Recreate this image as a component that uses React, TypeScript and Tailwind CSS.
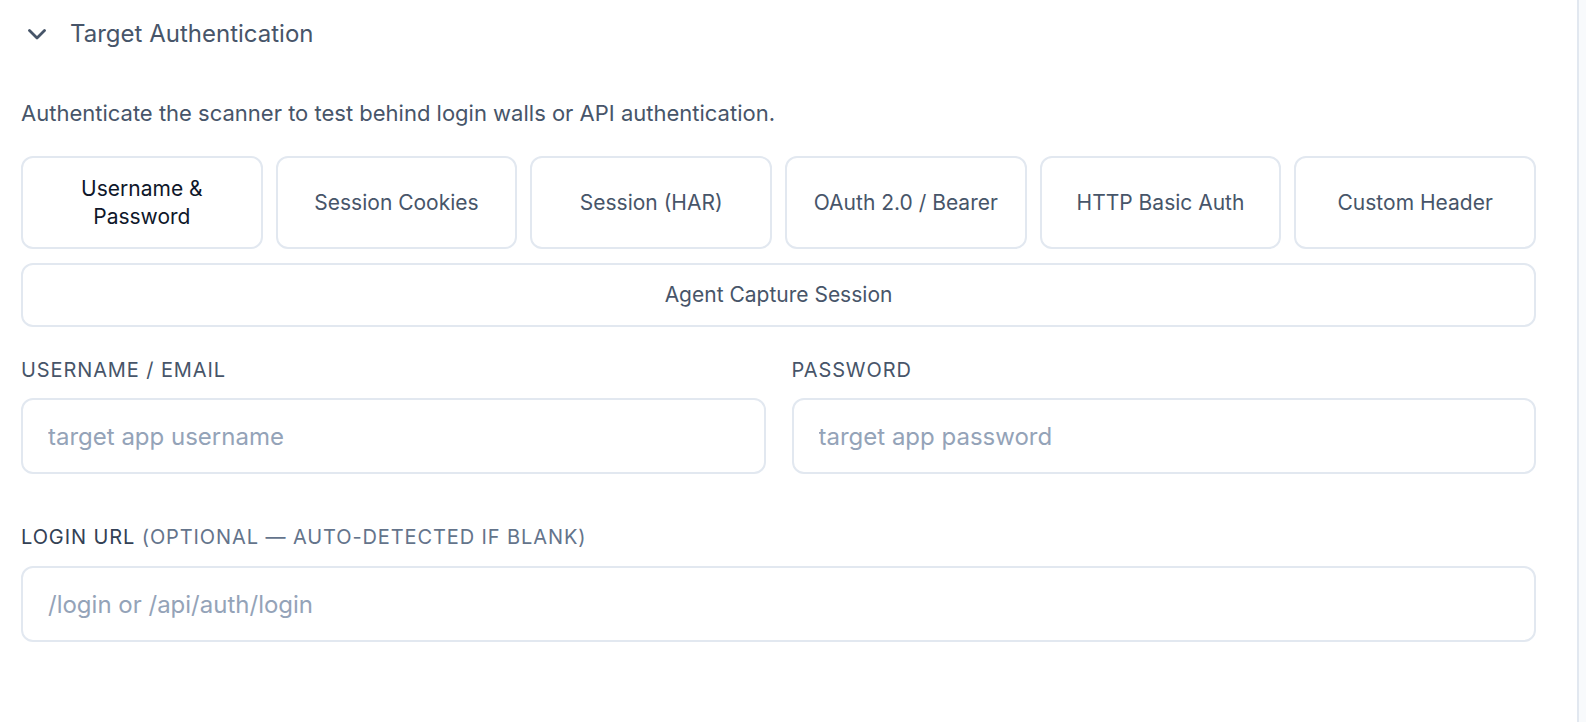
import {useState} from 'react';

const METHODS = [
	'Username & Password',
	'Session Cookies',
	'Session (HAR)',
	'OAuth 2.0 / Bearer',
	'HTTP Basic Auth',
	'Custom Header',
];

export default function App() {
	const [method, setMethod] = useState('Username & Password');

	return (
		<div className="flex min-h-[722px] w-full bg-white font-['Inter',sans-serif]">
			<div className="w-[1579px] shrink-0 border-r-2 border-[#e2e8f0] pl-[21px] pr-[41px]">
				{/* Section header */}
				<div className="flex h-[68px] items-center pl-[7px]">
					<svg width="18" height="11" viewBox="0 0 18 11" fill="none" className="text-[#475569]">
						<path d="M1.5 1.5 9 9l7.5-7.5" stroke="currentColor" strokeWidth="2.8" strokeLinecap="round" strokeLinejoin="round" />
					</svg>
					<span className="ml-[24px] text-[24px] leading-[32px] text-[#475569]">Target Authentication</span>
				</div>

				<p className="mt-[31px] text-[22px] leading-[28px] text-[#475569]">
					Authenticate the scanner to test behind login walls or API authentication.
				</p>

				{/* Auth method picker */}
				<div className="mt-[29px] grid grid-cols-6 gap-x-[13px] gap-y-[14px]">
					{METHODS.map(m => (
						<button
							key={m}
							onClick={() => setMethod(m)}
							className={`h-[93px] rounded-xl border-2 border-[#e2e8f0] bg-white px-6 text-center text-[21px] leading-[28px] ${
								method === m ? 'text-[#0f172a]' : 'text-[#475569]'
							}`}
						>
							{m}
						</button>
					))}
					<button
						onClick={() => setMethod('Agent Capture Session')}
						className={`col-span-6 h-[64px] rounded-xl border-2 border-[#e2e8f0] bg-white text-[21px] ${
							method === 'Agent Capture Session' ? 'text-[#0f172a]' : 'text-[#475569]'
						}`}
					>
						Agent Capture Session
					</button>
				</div>

				{/* Credentials */}
				<div className="mt-[31px] grid grid-cols-2 gap-x-[26px]">
					<div>
						<label className="block text-[20px] leading-[24px] tracking-[0.045em] text-[#475569]">USERNAME / EMAIL</label>
						<input
							placeholder="target app username"
							className="mt-[16px] h-[76px] w-full rounded-xl border-2 border-[#e2e8f0] bg-white px-[25px] text-[24px] text-[#0f172a] outline-none placeholder:text-[#94a3b8]"
						/>
					</div>
					<div>
						<label className="block text-[20px] leading-[24px] tracking-[0.045em] text-[#475569]">PASSWORD</label>
						<input
							type="password"
							placeholder="target app password"
							className="mt-[16px] h-[76px] w-full rounded-xl border-2 border-[#e2e8f0] bg-white px-[25px] text-[24px] text-[#0f172a] outline-none placeholder:text-[#94a3b8]"
						/>
					</div>
				</div>

				<label className="mt-[51px] block text-[20px] leading-[24px] tracking-[0.045em] text-[#334155]">
					LOGIN URL <span className="text-[#64748b]">(OPTIONAL — AUTO-DETECTED IF BLANK)</span>
				</label>
				<input
					placeholder="/login or /api/auth/login"
					className="mt-[17px] h-[76px] w-full rounded-xl border-2 border-[#e2e8f0] bg-white px-[25px] text-[24px] text-[#0f172a] outline-none placeholder:text-[#94a3b8]"
				/>
			</div>
			<div className="flex-1 bg-[#f8fafc]" />
		</div>
	);
}
